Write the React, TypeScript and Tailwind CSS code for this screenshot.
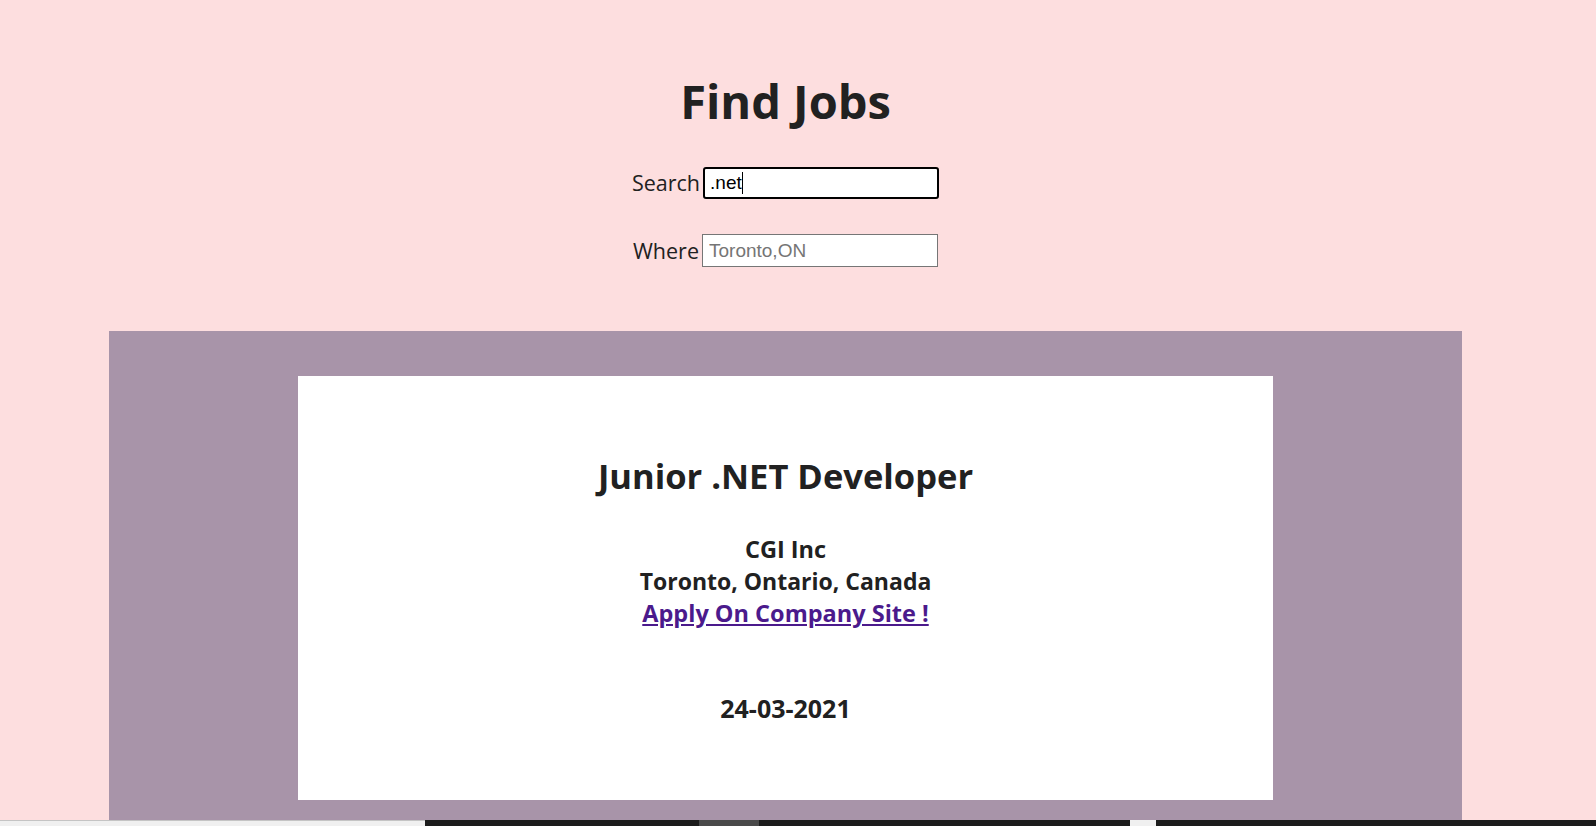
export default function App() {
  return (
    <div className="h-screen flex flex-col bg-[#fddedf] overflow-hidden text-[#212121] font-['Open_Sans',sans-serif]">
      {/* Page */}
      <div className="flex-1 overflow-hidden">
        <div className="ml-[109px] w-[1353px]">
          {/* Search header */}
          <header className="pt-[78px] pb-[64px] flex flex-col items-center">
            <h1 className="text-[47px] font-bold leading-none">Find Jobs</h1>

            <div className="mt-[42px] flex items-center gap-[3px]">
              <label className="text-[21.5px] leading-none">Search</label>
              <div className="w-[236px] h-[32px] bg-white border-2 border-black rounded-[3px] pl-[5px] flex items-center font-['Liberation_Sans',sans-serif] text-[19px] text-black">
                <span>.net</span>
                <span className="w-px h-[22px] bg-black" />
              </div>
            </div>

            <div className="mt-[35px] flex items-center gap-[3px]">
              <label className="text-[21.5px] leading-none">Where</label>
              <input
                placeholder="Toronto,ON"
                className="w-[236px] h-[33px] bg-white border border-[#767676] pl-[6px] font-['Liberation_Sans',sans-serif] text-[19px] placeholder:text-[#757575] outline-none"
              />
            </div>
          </header>

          {/* Results */}
          <section className="bg-[#a894a9] px-[189px] pt-[45px] pb-[45px]">
            <div className="bg-white h-[424px] pt-[83px] flex flex-col items-center font-bold">
              <h2 className="text-[34.5px] leading-none">Junior .NET Developer</h2>
              <div className="mt-[39px] flex flex-col items-center leading-[32px]">
                <span className="text-[23.5px]">CGI Inc</span>
                <span className="text-[23px]">Toronto, Ontario, Canada</span>
                <a href="#" className="text-[23.5px] text-[#4b1a8c] underline">
                  Apply On Company Site !
                </a>
              </div>
              <p className="mt-[63px] text-[25px] leading-[32px]">24-03-2021</p>
            </div>
          </section>
        </div>
      </div>

      {/* Bottom strip */}
      <div className="h-[6px] flex shrink-0">
        <div className="w-[425px] bg-[#f0f0f0] border-t border-[#c4c4c4]" />
        <div className="w-[274px] bg-[#1c1c1c]" />
        <div className="w-[60px] bg-[#4a4a4a]" />
        <div className="w-[371px] bg-[#1c1c1c]" />
        <div className="w-[26px] bg-[#f0f0f0]" />
        <div className="flex-1 bg-[#1c1c1c]" />
      </div>
    </div>
  );
}
